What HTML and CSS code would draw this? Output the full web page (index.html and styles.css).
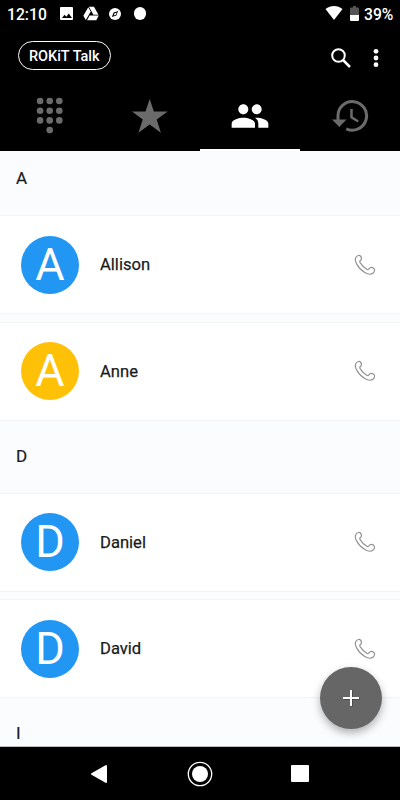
FILE: index.html
```html
<!DOCTYPE html>
<html lang="en">
<head>
<meta charset="utf-8">
<title>ROKiT Talk</title>
<link rel="stylesheet" href="styles.css">
</head>
<body>
<svg width="0" height="0" class="defs">
  <symbol id="phone" viewBox="0 0 22 22"><path d="M2 3.2 C3.2 1.2 5.8.8 6.9 2.6 C7.8 4.2 7.6 5.6 6.2 6.7 C5.6 7.2 5.7 7.9 6.1 8.6 C7.8 11.3 10.2 13.7 12.8 15.3 C13.6 15.8 14.3 15.7 14.9 14.9 C16 13.3 17.8 13.1 19.3 14.1 C21.1 15.3 20.8 17.7 19.2 19 C17 20.8 13.8 20.4 10.8 18.6 C7.1 16.3 4.2 12.9 2.4 9.4 C1.2 7 1 4.9 2 3.2Z"/></symbol>
</svg>
<div class="screen">
  <header class="status">
    <span class="time">12:10</span>
    <svg class="s-img" viewBox="0 0 13 13"><path fill="#fff" d="M1 0h11a1 1 0 0 1 1 1v11a1 1 0 0 1-1 1H1a1 1 0 0 1-1-1V1a1 1 0 0 1 1-1z"/><path d="M2 11l2.5-3.3 1.8 2.1 2.5-3.3L12 11z"/></svg>
    <svg class="s-drive" viewBox="0 0 24 22"><path fill="#fff" d="M7.900 1.500L.5 14.200l3.700 6.500L11.600 8zM9.900 14l-3.800 7h13.800l3.800-7zM23.200 12.800L16.500 1H8.900L15.600 12.800z"/></svg>
    <svg class="s-compass" viewBox="0 0 12 12"><circle cx="6" cy="6" r="6" fill="#fff"/><path d="M2.900 9.100l1.700-4.500 4.500-1.700-1.700 4.500z"/><path d="M4.700 7.600l.7-2.200 2.300-.8-.9 2.100z" fill="#fff"/></svg>
    <i class="s-dot"></i>
    <svg class="s-wifi" viewBox="0 0 18 14"><path fill="#fff" d="M.5 3C5.5-.9 12.500-.9 17.500 3L9 14z"/></svg>
    <svg class="s-batt" viewBox="0 0 9 15"><path fill="#555" d="M3 0h3v1.500h2a1 1 0 0 1 1 1V9H0V2.500a1 1 0 0 1 1-1h2z"/><path fill="#fff" d="M0 9h9v5a1 1 0 0 1-1 1H1a1 1 0 0 1-1-1z"/></svg>
    <span class="pct">39%</span>
  </header>
  <div class="appbar">
    <div class="pill">ROKiT Talk</div>
    <svg class="search" viewBox="0 0 20 20"><g fill="none" stroke="#fff"><circle cx="7.500" cy="7.500" r="6.300" stroke-width="2"/><path d="M12 12l7 7" stroke-width="2.500"/></g></svg>
    <svg class="more" viewBox="0 0 6 20"><g fill="#fff"><circle cx="3" cy="3.300" r="2.400"/><circle cx="3" cy="10" r="2.400"/><circle cx="3" cy="16.700" r="2.400"/></g></svg>
  </div>
  <nav class="tabs">
    <div class="tab"><svg width="28" height="38" viewBox="0 0 28 38"><g fill="#6b6b6b"><circle cx="4.100" cy="4" r="3.300"/><circle cx="13.700" cy="4" r="3.300"/><circle cx="23.300" cy="4" r="3.300"/><circle cx="4.100" cy="13.700" r="3.300"/><circle cx="13.700" cy="13.700" r="3.300"/><circle cx="23.300" cy="13.700" r="3.300"/><circle cx="4.100" cy="23.400" r="3.300"/><circle cx="13.700" cy="23.400" r="3.300"/><circle cx="23.300" cy="23.400" r="3.300"/><circle cx="13.700" cy="33.100" r="3.300"/></g></svg></div>
    <div class="tab"><svg width="36" height="36" viewBox="0 0 36 36"><path fill="#6b6b6b" d="M17.700 1l4.200 12.600H35.700L24.700 21.500l4.200 13.300L17.700 26.600 6.500 34.800l4.200-13.300L0 13.600h13.500z"/></svg></div>
    <div class="tab active"><svg width="40" height="40" viewBox="0 0 24 24"><path fill="#fff" d="M16 11c1.660 0 2.990-1.340 2.990-3S17.660 5 16 5s-3 1.340-3 3 1.340 3 3 3zm-8 0c1.660 0 2.990-1.340 2.990-3S9.660 5 8 5 5 6.340 5 8s1.340 3 3 3zm0 2c-2.330 0-7 1.170-7 3.500V19h14v-2.500c0-2.330-4.670-3.500-7-3.500zm8 0c-.29 0-.62.020-.97.050 1.160.840 1.970 1.970 1.970 3.450V19h6v-2.500c0-2.330-4.670-3.500-7-3.500z"/></svg></div>
    <div class="tab"><svg width="38" height="34" viewBox="0 0 38 34"><g fill="none" stroke="#6b6b6b"><path d="M7 21v-3.500a14.300 14.300 0 1 1 8.200 12.300" stroke-width="3"/><path d="M20.500 10v8.300l6.700 4.200" stroke-width="2.500"/></g><path fill="#6b6b6b" d="M1 20.500h14.500l-7.200 7.500z"/></svg></div>
  </nav>
  <main class="list">
    <h2>A</h2>
    <div class="row"><span class="avatar">A</span><span class="name">Allison</span><svg class="call"><use href="#phone"/></svg></div>
    <div class="row next"><span class="avatar amber">A</span><span class="name">Anne</span><svg class="call"><use href="#phone"/></svg></div>
    <h2>D</h2>
    <div class="row"><span class="avatar">D</span><span class="name">Daniel</span><svg class="call"><use href="#phone"/></svg></div>
    <div class="row next"><span class="avatar">D</span><span class="name">David</span><svg class="call"><use href="#phone"/></svg></div>
    <h2>I</h2>
  </main>
  <footer class="navbar">
    <svg width="18" height="20" viewBox="0 0 18 20"><path fill="#fff" stroke="#fff" stroke-width="2" stroke-linejoin="round" d="M2 10L16 2v16z"/></svg>
    <svg width="26" height="26" viewBox="0 0 26 26"><circle cx="13" cy="13" r="11.700" fill="none" stroke="#fff" stroke-width="1.300"/><circle cx="13" cy="13" r="8" fill="#fff"/></svg>
    <i class="square"></i>
  </footer>
  <button class="fab" aria-label="Add contact"><svg width="18" height="18" viewBox="0 0 18 18"><path d="M1.500 9.500h16M9.500 1.500v16" stroke="#333" stroke-width="2"/><path d="M1 9h16M9 1v16" stroke="#fff" stroke-width="2"/></svg></button>
</div>
</body>
</html>
```
FILE: styles.css
```css
* { box-sizing: border-box; }
body { margin: 0; font-family: Roboto, sans-serif; }
svg { display: block; flex: none; }
.defs { position: absolute; }
.screen {
  position: relative;
  width: 400px;
  height: 800px;
  overflow: hidden;
  display: flex;
  flex-direction: column;
  background: #000;
}
.status {
  height: 28px;
  flex: none;
  display: flex;
  align-items: center;
  padding: 0 7px;
  color: #fff;
  font-size: 15.700px;
  font-weight: 500;
}
.time { width: 53px; }
.s-img { width: 13px; height: 13px; margin-top: -1px; }
.s-drive { width: 16px; height: 15px; margin: -1px 0 0 10px; }
.s-compass { width: 12px; height: 12px; margin: -1px 0 0 10px; }
.s-dot { width: 12.500px; height: 12.500px; margin: -1px 0 0 12.500px; border-radius: 50%; background: #fff; }
.s-wifi { width: 18px; height: 14px; margin: -2px 0 0 auto; }
.s-batt { width: 9px; height: 15px; margin: -1px 5px 0 7px; }
.pct { width: 29px; white-space: nowrap; }
.appbar {
  height: 56px;
  flex: none;
  display: flex;
  align-items: center;
  padding: 0 21.500px 0 17.500px;
}
.pill {
  width: 93.500px;
  height: 29px;
  margin: -1px auto 0 0;
  border: 1.300px solid #fff;
  border-radius: 15px;
  color: #fff;
  font-size: 14.500px;
  font-weight: 500;
  line-height: 29px;
  text-align: center;
  white-space: nowrap;
}
.search { width: 20px; height: 20px; margin: 3px 21.500px 0 0; }
.more { width: 6px; height: 20px; margin-top: 4px; }
.tabs { display: grid; grid-template-columns: repeat(4, 1fr); height: 67px; flex: none; }
.tab { display: flex; align-items: center; justify-content: center; padding-bottom: 4px; }
.tab.active { border-bottom: 2px solid #fff; padding-bottom: 1px; }
.list { flex: 1; min-height: 0; overflow: hidden; background: #fbfcfe; }
.list h2 {
  height: 74px;
  margin: 0;
  padding-left: 16px;
  color: #1b1b1b;
  font-size: 17px;
  font-weight: 400;
  line-height: 73px;
  -webkit-text-stroke: .2px #1b1b1b;
}
.list h2:first-child { height: 65px; line-height: 54px; }
.row {
  height: 97px;
  display: flex;
  align-items: center;
  padding: 0 24px 0 21px;
  background: #fff;
  box-shadow: 0 0 0 1px #f2f3f5;
}
.row.next { margin-top: 9.500px; }
.avatar {
  width: 58px;
  height: 58px;
  border-radius: 50%;
  background: #2196f3;
  color: #fff;
  font-size: 45px;
  line-height: 58px;
  text-align: center;
}
.amber { background: #ffc107; }
.name {
  flex: 1;
  margin-left: 21px;
  color: #1b1b1b;
  font-size: 16.600px;
  -webkit-text-stroke: .25px #1b1b1b;
}
.call { width: 22px; height: 22px; fill: none; stroke: #929292; stroke-width: 1.200; }
.navbar {
  height: 54px;
  flex: none;
  display: flex;
  align-items: center;
  justify-content: space-between;
  padding: 0 91px 0 90px;
  border-top: 1px solid #b9bbbd;
}
.square { width: 18px; height: 17px; border-radius: 1px; background: #fff; }
.fab {
  position: absolute;
  left: 320px;
  top: 667px;
  width: 62px;
  height: 62px;
  padding: 0;
  display: flex;
  align-items: center;
  justify-content: center;
  border: 0;
  border-radius: 50%;
  background: #666;
  box-shadow: 0 4px 9px rgba(0, 0, 0, .3);
}
```
